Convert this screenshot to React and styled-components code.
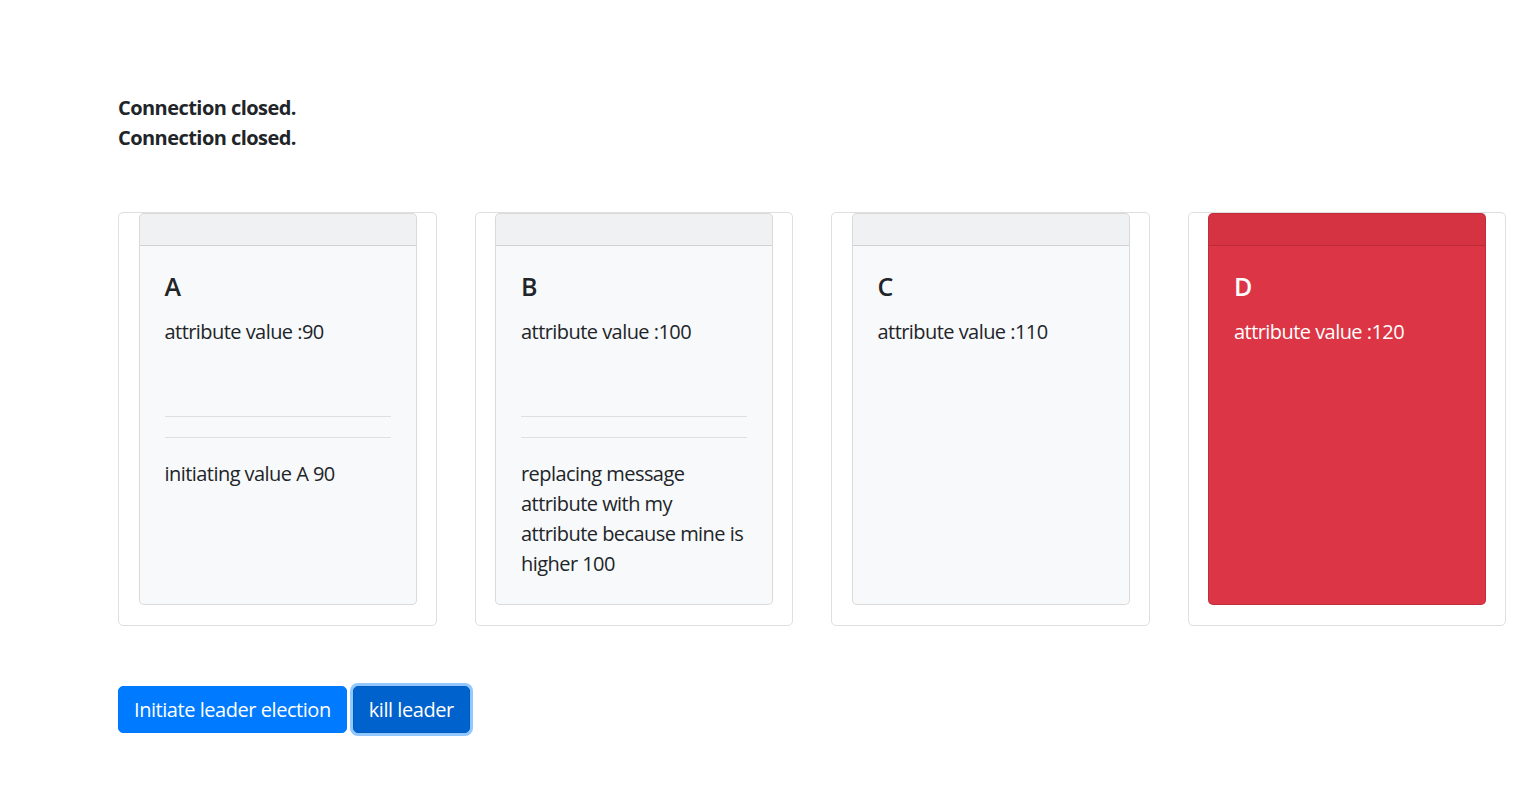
import React from "react";
import styled, { createGlobalStyle } from "styled-components";

const GlobalStyle = createGlobalStyle`
  body {
    margin: 0;
    background: #fff;
    color: #212529;
    font-family: "Open Sans", "Noto Sans", sans-serif;
    font-size: 20px;
    line-height: 1.5;
    letter-spacing: -0.55px;
  }
`;

const Page = styled.div`
  padding: 93px 0 40px 118px;
  width: 1388px;
`;

const Log = styled.div`
  font-weight: 700;
`;

const Grid = styled.div`
  margin-top: 59px;
  display: grid;
  grid-template-columns: repeat(4, 1fr);
  gap: 38px;
`;

const Holder = styled.div`
  display: flex;
  flex-direction: column;
  border: 1px solid #dfdfdf;
  border-radius: 5px;
  padding: 0 19px 20px 19.5px;
`;

const NodeCard = styled.div`
  flex: 1;
  display: flex;
  flex-direction: column;
  border: 1px solid rgba(0, 0, 0, 0.125);
  border-radius: 5px;
  background: ${p => (p.$leader ? "#dc3545" : "#f8f9fa")};
  color: ${p => (p.$leader ? "#fff" : "#212529")};
  overflow: hidden;
`;

const Header = styled.div`
  height: 31px;
  background: rgba(0, 0, 0, 0.03);
  border-bottom: 1px solid rgba(0, 0, 0, 0.125);
`;

const Body = styled.div`
  flex: 1;
  padding: 25px;
`;

const Title = styled.h5`
  margin: 0 0 16px;
  font-size: 25px;
  font-weight: 600;
  line-height: 30px;
`;

const Text = styled.p`
  margin: 0 0 20px;
  &:last-child {
    margin-bottom: 0;
  }
`;

const Spacer = styled.div`
  height: 29px;
`;

const Rule = styled.hr`
  border: 0;
  border-top: 1px solid rgba(0, 0, 0, 0.1);
  margin: 20px 0;
  & + & {
    margin-bottom: 21px;
  }
`;

const Actions = styled.div`
  margin-top: 60px;
  display: flex;
  gap: 6px;
`;

const Button = styled.button`
  font-family: inherit;
  font-size: 20px;
  letter-spacing: -0.45px;
  line-height: 30px;
  padding: 7.5px 15px;
  border-radius: 5px;
  color: #fff;
  cursor: pointer;
  background: ${p => (p.$focused ? "#0062cc" : "#007bff")};
  border: 1px solid ${p => (p.$focused ? "#005cbf" : "#007bff")};
  box-shadow: ${p => (p.$focused ? "0 0 0 3px rgba(38, 143, 255, 0.5)" : "none")};
`;

const nodes = [
  { name: "A", value: 90, messages: ["initiating value A 90"] },
  { name: "B", value: 100, messages: ["replacing message attribute with my attribute because mine is higher 100"] },
  { name: "C", value: 110 },
  { name: "D", value: 120, leader: true },
];

export default function App() {
  return (
    <>
      <GlobalStyle />
      <Page>
        <Log>Connection closed.</Log>
        <Log>Connection closed.</Log>
        <Grid>
          {nodes.map(node => (
            <Holder key={node.name}>
              <NodeCard $leader={node.leader}>
                <Header />
                <Body>
                  <Title>{node.name}</Title>
                  <Text>attribute value :{node.value}</Text>
                  {node.messages && (
                    <>
                      <Spacer />
                      <Rule />
                      <Rule />
                      {node.messages.map((m, i) => (
                        <Text key={i}>{m}</Text>
                      ))}
                    </>
                  )}
                </Body>
              </NodeCard>
            </Holder>
          ))}
        </Grid>
        <Actions>
          <Button>Initiate leader election</Button>
          <Button $focused>kill leader</Button>
        </Actions>
      </Page>
    </>
  );
}
